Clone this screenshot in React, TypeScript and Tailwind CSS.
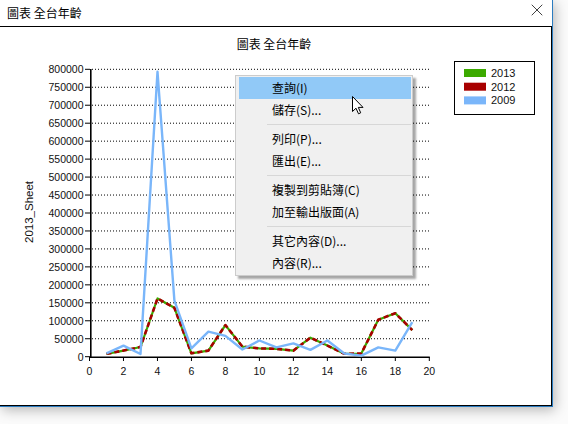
import { X } from 'lucide-react'

const blue2009 = [9500, 30600, 7500, 793000, 156000, 23000, 70000, 58000, 20000, 45000, 26000, 37000, 19000, 45000, 9000, 3000, 26000, 17000, 96000]
const red2012 = [8000, 17000, 27000, 162000, 136000, 9500, 17000, 88000, 28000, 23000, 22000, 17000, 53000, 31000, 8000, 9000, 103000, 121000, 74000]

const vx = (x: number) => 89.5 + x * 16.99
const vy = (v: number) => 356.7 - (v * 287.4) / 800000
const pts = (data: number[]) => data.map((v, i) => `${vx(i + 1).toFixed(1)},${vy(v).toFixed(1)}`).join(' ')

const yTicks = Array.from({ length: 17 }, (_, i) => i * 50000)
const xTicks = Array.from({ length: 11 }, (_, i) => i * 2)

const legend = [
  { label: '2013', color: '#3caa00' },
  { label: '2012', color: '#a80000' },
  { label: '2009', color: '#7ab6fa' },
]

type MenuEntry = { label: string; active?: boolean } | 'sep'

const menu: MenuEntry[] = [
  { label: '查詢(I)', active: true },
  { label: '儲存(S)...' },
  'sep',
  { label: '列印(P)...' },
  { label: '匯出(E)...' },
  'sep',
  { label: '複製到剪貼簿(C)' },
  { label: '加至輸出版面(A)' },
  'sep',
  { label: '其它內容(D)...' },
  { label: '內容(R)...' },
]

function Chart() {
  return (
    <svg width={551} height={378} viewBox="0 27 551 378" className="block">
      <text x={274} y={49} textAnchor="middle" fontSize={12} fontFamily="'Noto Sans CJK TC', sans-serif" fill="#000">
        圖表 全台年齡
      </text>
      <text
        transform="translate(32.5 212) rotate(-90)"
        textAnchor="middle"
        fontSize={11.5}
        fontFamily="'Liberation Sans', Arial, sans-serif"
        fill="#111"
      >
        2013_Sheet
      </text>

      {yTicks.map((v) => (
        <g key={v}>
          {v > 0 && (
            <line x1={92} x2={429.5} y1={vy(v)} y2={vy(v)} stroke="#000" strokeWidth={1} strokeDasharray="1 2" />
          )}
          <line x1={85} x2={90} y1={vy(v)} y2={vy(v)} stroke="#000" strokeWidth={1} />
          <text
            x={83.5}
            y={vy(v) + 3.8}
            textAnchor="end"
            fontSize={10.5}
            fontFamily="'Liberation Sans', Arial, sans-serif"
            fill="#111"
          >
            {v}
          </text>
        </g>
      ))}

      {xTicks.map((x) => (
        <g key={x}>
          <line x1={vx(x)} x2={vx(x)} y1={357} y2={361} stroke="#000" strokeWidth={1} />
          <text
            x={vx(x)}
            y={375}
            textAnchor="middle"
            fontSize={10.5}
            fontFamily="'Liberation Sans', Arial, sans-serif"
            fill="#111"
          >
            {x}
          </text>
        </g>
      ))}

      <line x1={90.8} x2={90.8} y1={69} y2={358} stroke="#000" strokeWidth={1.6} />
      <line x1={90} x2={429.8} y1={357.2} y2={357.2} stroke="#000" strokeWidth={1.6} />

      {/* 2013 sits exactly under 2012, so it only peeks out between the dashes */}
      <polyline points={pts(red2012)} fill="none" stroke="#3caa00" strokeWidth={2.2} strokeLinejoin="round" />
      <polyline
        points={pts(red2012)}
        fill="none"
        stroke="#a80000"
        strokeWidth={2.6}
        strokeDasharray="5 3"
        strokeLinejoin="round"
      />
      <polyline points={pts(blue2009)} fill="none" stroke="#7ab6fa" strokeWidth={2.4} strokeLinejoin="round" />

      <rect x={454.5} y={61.5} width={80} height={53} fill="#fff" stroke="#000" strokeWidth={1} />
      {legend.map((l, i) => (
        <g key={l.label}>
          <rect x={464} y={69 + i * 13.7} width={22} height={8} fill={l.color} />
          <text
            x={491}
            y={77 + i * 13.7}
            fontSize={11}
            fontFamily="'Liberation Sans', Arial, sans-serif"
            fill="#111"
          >
            {l.label}
          </text>
        </g>
      ))}
    </svg>
  )
}

function ContextMenu() {
  return (
    <div className="absolute left-[235px] top-[75px] w-[178px] border border-[#cccccc] bg-[#f0f0f0] py-[1px] pl-[3px] pr-[1px] font-['Noto_Sans_CJK_TC',sans-serif] text-[12px] text-black shadow-[3px_3px_2px_rgba(0,0,0,0.35)]">
      {menu.map((m, i) =>
        m === 'sep' ? (
          <div key={i} className="flex h-[7px] items-center pl-[28px]">
            <div className="h-px w-full bg-[#d7d7d7]" />
          </div>
        ) : (
          <div
            key={i}
            className={`h-[22px] pl-[33px] leading-[22px] ${m.active ? 'bg-[#91c9f7]' : ''}`}
          >
            {m.label}
          </div>
        ),
      )}
    </div>
  )
}

function Pointer() {
  return (
    <svg className="absolute left-[352px] top-[96px]" width={12} height={19} viewBox="0 0 12 19">
      <path
        d="M0.5 0.5 L0.5 15.5 L4 12.2 L6.5 17.8 L8.7 16.8 L6.3 11.4 L11 11.4 Z"
        fill="#fff"
        stroke="#000"
        strokeWidth={1}
        strokeLinejoin="miter"
      />
    </svg>
  )
}

export default function App() {
  return (
    <div className="relative h-[424px] w-[568px] overflow-hidden bg-[#fbfbfb]">
      <div className="w-[553px] border-r border-b border-[#2b7cc0] bg-white shadow-[2px_3px_12px_rgba(0,0,0,0.28)]">
        <div className="flex h-[26px] items-start justify-between pl-[7px] pr-[5px]">
          <span className="mt-[4px] font-['Noto_Sans_CJK_TC',sans-serif] text-[12px] leading-[18px] text-black">
            圖表 全台年齡
          </span>
          <X className="h-[20px] w-[20px] text-black" strokeWidth={0.9} />
        </div>
        <div className="h-[380px] border-t border-r border-b border-black">
          <Chart />
        </div>
      </div>
      <ContextMenu />
      <Pointer />
    </div>
  )
}
